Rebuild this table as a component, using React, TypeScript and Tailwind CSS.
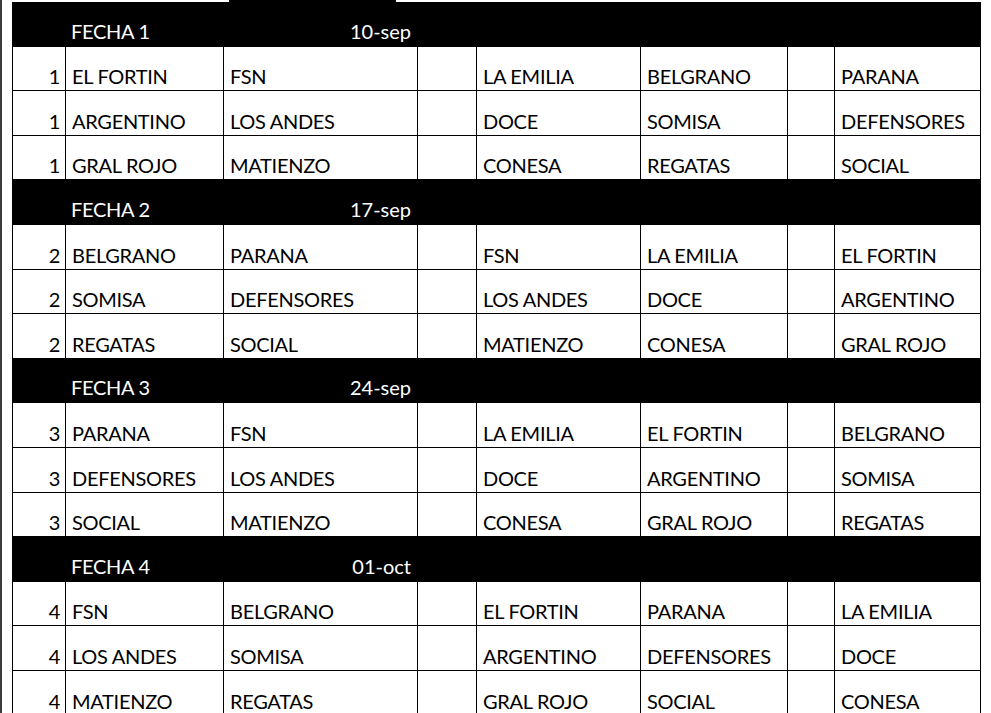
import React from 'react';

type Fecha = {
    num: number;
    date: string;
    rows: string[][];
};

const fechas: Fecha[] = [
    {
        num: 1,
        date: '10-sep',
        rows: [
            ['EL FORTIN', 'FSN', '', 'LA EMILIA', 'BELGRANO', '', 'PARANA'],
            ['ARGENTINO', 'LOS ANDES', '', 'DOCE', 'SOMISA', '', 'DEFENSORES'],
            ['GRAL ROJO', 'MATIENZO', '', 'CONESA', 'REGATAS', '', 'SOCIAL'],
        ],
    },
    {
        num: 2,
        date: '17-sep',
        rows: [
            ['BELGRANO', 'PARANA', '', 'FSN', 'LA EMILIA', '', 'EL FORTIN'],
            ['SOMISA', 'DEFENSORES', '', 'LOS ANDES', 'DOCE', '', 'ARGENTINO'],
            ['REGATAS', 'SOCIAL', '', 'MATIENZO', 'CONESA', '', 'GRAL ROJO'],
        ],
    },
    {
        num: 3,
        date: '24-sep',
        rows: [
            ['PARANA', 'FSN', '', 'LA EMILIA', 'EL FORTIN', '', 'BELGRANO'],
            ['DEFENSORES', 'LOS ANDES', '', 'DOCE', 'ARGENTINO', '', 'SOMISA'],
            ['SOCIAL', 'MATIENZO', '', 'CONESA', 'GRAL ROJO', '', 'REGATAS'],
        ],
    },
    {
        num: 4,
        date: '01-oct',
        rows: [
            ['FSN', 'BELGRANO', '', 'EL FORTIN', 'PARANA', '', 'LA EMILIA'],
            ['LOS ANDES', 'SOMISA', '', 'ARGENTINO', 'DEFENSORES', '', 'DOCE'],
            ['MATIENZO', 'REGATAS', '', 'GRAL ROJO', 'SOCIAL', '', 'CONESA'],
        ],
    },
];

const gridCols = 'grid grid-cols-[53px_158px_194px_59px_164px_147px_47px_147px]';

const HeaderRow: React.FC<{ fecha: Fecha }> = ({ fecha }) => (
    <div className={`${gridCols} h-[44.6px] bg-black text-white`}>
        <div />
        <div className="flex items-end px-[6px] pb-[4px]">FECHA {fecha.num}</div>
        <div className="flex items-end justify-end px-[6px] pb-[4px] tracking-[0px]">{fecha.date}</div>
        <div />
        <div />
        <div />
        <div />
        <div />
    </div>
);

const DataRow: React.FC<{ num: number; cells: string[] }> = ({ num, cells }) => (
    <div className={`${gridCols} h-[44.6px] border-b border-black bg-white text-black`}>
        <div className="flex items-end justify-end border-l border-black px-[5px] pb-[2px]">{num}</div>
        {cells.map((c, i) => (
            <div
                key={i}
                className={`flex items-end border-l border-black px-[6px] pb-[2px] ${i === cells.length - 1 ? 'border-r' : ''}`}
            >
                {c}
            </div>
        ))}
    </div>
);

export default function App() {
    return (
        <div className="h-[713px] w-[991px] overflow-hidden bg-white text-[20px] leading-[24px] tracking-[-0.3px] font-['Lato',sans-serif]">
            <div className="flex h-full">
                <div className="w-[2px] shrink-0 bg-[#3c3c3c]" />
                <div className="flex flex-1 flex-col">
                    <div className="flex h-[2px] shrink-0">
                        <div className="w-[227px] bg-white" />
                        <div className="w-[167px] bg-black" />
                        <div className="flex-1 bg-white" />
                    </div>
                    <div className="ml-[10px] w-[969px]">
                        {fechas.map((f) => (
                            <div key={f.num}>
                                <HeaderRow fecha={f} />
                                {f.rows.map((r, i) => (
                                    <DataRow key={i} num={f.num} cells={r} />
                                ))}
                            </div>
                        ))}
                    </div>
                </div>
            </div>
        </div>
    );
}
